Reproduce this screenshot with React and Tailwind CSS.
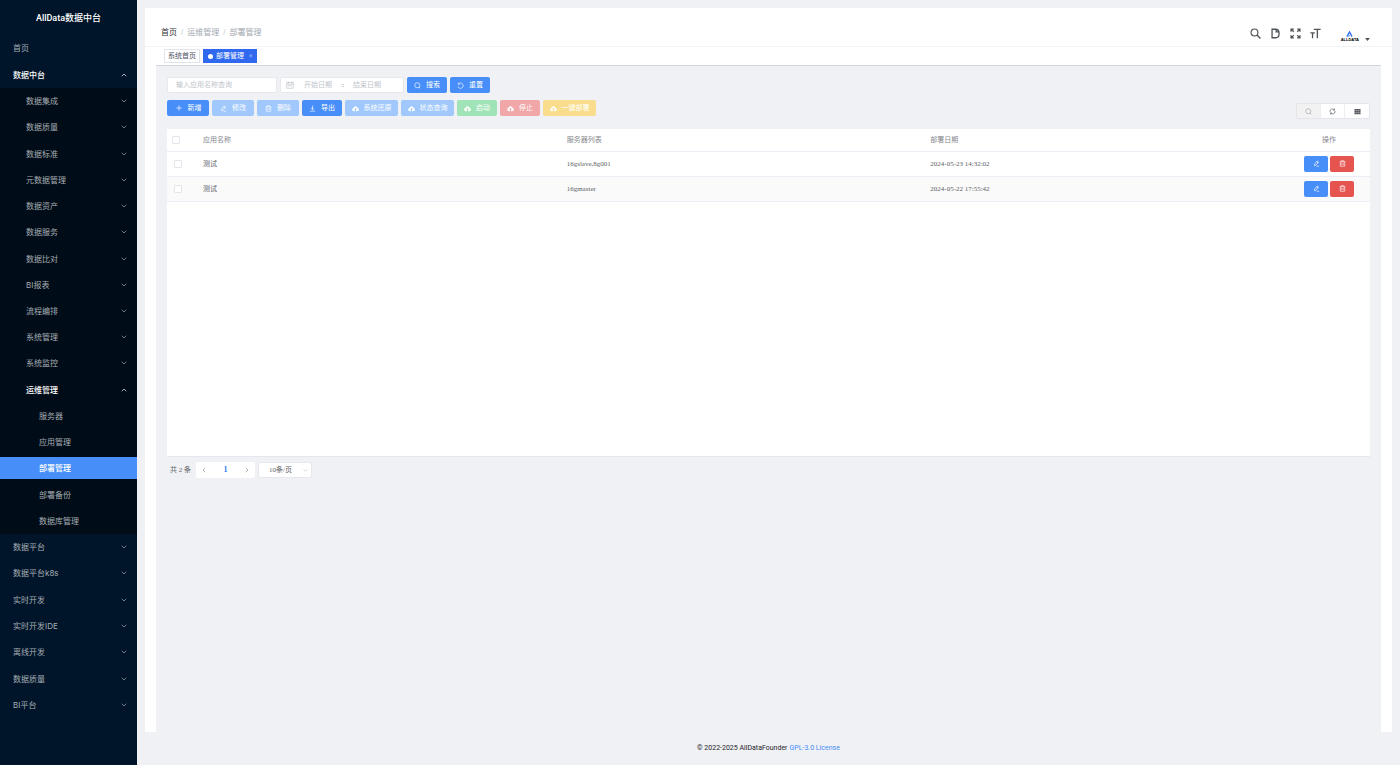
import React, { useState } from "react";
import { ChevronDown, ChevronUp, ChevronLeft, ChevronRight, Plus } from "lucide-react";

const subMenu = [
  { label: "数据集成" },
  { label: "数据质量" },
  { label: "数据标准" },
  { label: "元数据管理" },
  { label: "数据资产" },
  { label: "数据服务" },
  { label: "数据比对" },
  { label: "BI报表" },
  { label: "流程编排" },
  { label: "系统管理" },
  { label: "系统监控" },
  { label: "运维管理", open: true },
  { label: "服务器", leaf: true },
  { label: "应用管理", leaf: true },
  { label: "部署管理", leaf: true, active: true },
  { label: "部署备份", leaf: true },
  { label: "数据库管理", leaf: true },
];

const bottomMenu = ["数据平台", "数据平台k8s", "实时开发", "实时开发IDE", "离线开发", "数据质量", "BI平台"];

const rows = [
  { name: "测试", servers: "16gslave,8g001", date: "2024-05-23 14:32:02" },
  { name: "测试", servers: "16gmaster", date: "2024-05-22 17:55:42" },
];

function Icon({ children, className = "size-[7px]", box = "0 0 16 16", width = 1.5 }) {
  return (
    <svg viewBox={box} className={`shrink-0 ${className}`} fill="none" stroke="currentColor" strokeWidth={width} aria-hidden="true">
      {children}
    </svg>
  );
}

const EditIcon = ({ className }) => (
  <Icon className={className}>
    <path d="M3.5 9.5 9.8 2l3 2.5-6.3 7.6-3.3.9zM8.5 4l3 2.5M8 14.2h6" />
  </Icon>
);
const TrashIcon = ({ className }) => (
  <Icon className={className}>
    <path d="M1.5 4h13M5 4V1.8h6V4M3 4v10.2h10V4M6.3 7v4.2M9.7 7v4.2" />
  </Icon>
);
const DownloadIcon = () => (
  <Icon>
    <path d="M8 1.5V10M4.5 7 8 10.5 11.5 7M2 14h12" />
  </Icon>
);
const CloudIcon = () => (
  <svg viewBox="0 0 16 16" className="size-[7px] shrink-0" fill="currentColor" aria-hidden="true">
    <path fillRule="evenodd" d="M4 14a3.7 3.7 0 0 1-.8-7.3 5 5 0 0 1 9.7 0A3.7 3.7 0 0 1 12 14H9V10h2.3L8 6.4 4.7 10H7v4z" />
  </svg>
);
const SearchSmall = () => (
  <Icon>
    <circle cx="7.5" cy="7.5" r="5.8" />
    <path d="m11.6 11.6 3 3" />
  </Icon>
);
const ResetIcon = () => (
  <Icon>
    <path d="M3.5 4.5a6 6 0 1 1-1.2 5.5M3 1.5V5h3.7" />
  </Icon>
);
const RefreshIcon = () => (
  <Icon>
    <path d="M2.3 9.5V7.5a5.3 5.3 0 0 1 9.7-3M12.5 1.5v3.2H9.3M13.7 6.5v2a5.3 5.3 0 0 1-9.7 3M3.5 14.5v-3.2h3.2" />
  </Icon>
);
const GridIcon = () => (
  <svg viewBox="0 0 16 16" className="size-[7px] shrink-0" fill="currentColor" aria-hidden="true">
    <path d="M1 2h4.5v3.6H1zM5.800 2h4.400v3.600H5.800zM10.500 2H15v3.600h-4.500zM1 6.100h4.500v3.700H1zM5.800 6.100h4.400v3.700H5.800zM10.500 6.100H15v3.700h-4.500zM1 10.300h4.500V14H1zM5.800 10.300h4.400V14H5.800zM10.500 10.300H15V14h-4.500z" />
  </svg>
);
const CalendarIcon = () => (
  <Icon className="size-[8px]" width={1.2}>
    <path d="M1.5 3h13v11.5h-13zM1.5 6.500h13M5 1v3.500M11 1v3.500M4 9.800h8" />
  </Icon>
);

function MenuRow({ label, indent = "pl-[13px]", open, leaf, active, strong }) {
  const Chevron = open ? ChevronUp : ChevronDown;
  return (
    <li className="flex min-h-0 flex-1 items-center">
      <a
        href="#"
        aria-current={active ? "page" : undefined}
        className={`flex h-[22px] w-full items-center justify-between pr-[9px] ${indent} ${
          active ? "bg-[#478ef8] font-medium text-white" : strong ? "font-medium text-white" : "text-[#a6adb4]"
        }`}
      >
        <span>{label}</span>
        {!leaf && <Chevron className="size-[8px]" strokeWidth={2} />}
      </a>
    </li>
  );
}

function Sidebar() {
  return (
    <aside className="flex w-[137px] shrink-0 flex-col bg-[#001529] font-['Inter','Noto_Sans_CJK_SC',sans-serif] text-[8px] leading-[12px]">
      <h1 className="flex h-[35px] items-center justify-center font-['Roboto','Noto_Sans_CJK_SC',sans-serif] text-[9px] font-medium text-white">
        AllData数据中台
      </h1>
      <nav>
        <ul className="flex h-[53px] flex-col">
          <MenuRow label="首页" leaf />
          <MenuRow label="数据中台" open strong />
        </ul>
        <ul className="flex h-[446px] flex-col bg-[#000c17]">
          {subMenu.map((m, i) => (
            <MenuRow key={i} {...m} strong={m.open} indent={m.leaf ? "pl-[39px]" : "pl-[26px]"} />
          ))}
        </ul>
        <ul className="flex h-[184px] flex-col">
          {bottomMenu.map((label) => (
            <MenuRow key={label} label={label} />
          ))}
        </ul>
      </nav>
    </aside>
  );
}

function TopBar() {
  return (
    <header className="flex h-[39px] items-center justify-between border-b border-[#f2f3f5] pt-[12px] pr-[22px] pl-[16px]">
      <nav aria-label="breadcrumb" className="flex items-center gap-[4px] text-[8px] text-[#a3a8b0]">
        <a href="#" className="text-[#303133]">首页</a>
        <span>/</span>
        <span>运维管理</span>
        <span>/</span>
        <span>部署管理</span>
      </nav>
      <div className="flex items-center gap-[9px] text-[#4f5358]">
        <button type="button" aria-label="搜索" className="flex">
          <Icon className="size-[11px]" width={1.6}>
            <circle cx="6.5" cy="6.5" r="5" />
            <path d="m10.2 10.2 5 5" strokeWidth="2" />
          </Icon>
        </button>
        <button type="button" aria-label="文档" className="flex">
          <Icon className="size-[11px]" width={1.9}>
            <path d="M3 1.8h5.5c3 0 4.700 2.200 4.700 6.200s-1.700 6.200-4.700 6.200H3zM9 2v3.500h3.500" />
          </Icon>
        </button>
        <button type="button" aria-label="全屏" className="flex">
          <Icon className="size-[11px]" width={1.8}>
            <path d="M1.500 5.500v-4h4M2 2l3.500 3.500M10.500 1.500h4v4M14 2l-3.500 3.500M1.500 10.500v4h4M2 14l3.500-3.500M14.500 10.500v4h-4M14 14l-3.500-3.500" />
          </Icon>
        </button>
        <button type="button" aria-label="字号" className="flex">
          <Icon className="size-[11px]" width={1.9}>
            <path d="M5.500 2h10M10.700 2v13M.5 7h6.500M3.700 7v8" />
          </Icon>
        </button>
        <button type="button" aria-label="用户" className="ml-[11px] flex items-center gap-[6px]">
          <span className="flex flex-col items-center pt-[6px]">
            <svg viewBox="0 0 16 14" className="h-[6px] w-[7px]" fill="none" stroke="#2f6df0" strokeWidth="3" aria-hidden="true">
              <path d="M2 13 8 2l6 11" />
              <path d="m5.500 13 2.500-4" stroke="#6fa3ff" />
            </svg>
            <span className="font-['Liberation_Sans',sans-serif] text-[4px] leading-[5px] font-bold text-black">ALLDATA</span>
          </span>
          <svg viewBox="0 0 8 5" className="mt-[12px] h-[3px] w-[5px]" fill="#4f5358" aria-hidden="true">
            <path d="M0 0h8L4 5z" />
          </svg>
        </button>
      </div>
    </header>
  );
}

function Tabs() {
  return (
    <nav aria-label="tabs" className="flex h-[19px] items-center gap-[3px] border-b border-[#d3d6dc] pl-[8px] text-[7px]">
      <a href="#" className="flex h-[14px] items-center border border-[#e0e3ea] px-[3px] text-[#495060]">系统首页</a>
      <a href="#" aria-current="page" className="flex h-[14px] items-center gap-[3px] bg-[#3069f0] px-[5px] text-white">
        <span className="size-[5px] rounded-full bg-white" />
        部署管理
        <span className="ml-[2px] text-[6px]">×</span>
      </a>
    </nav>
  );
}

const fieldBox = "flex h-[16px] items-center rounded-[2px] border border-[#e6e8ed] bg-white text-[7px]";
const buttonBase = "flex h-[16px] items-center justify-center gap-[5px] rounded-[2px] text-[7px] text-white";

function Filters() {
  return (
    <form className="flex items-center gap-[3px]" onSubmit={(e) => e.preventDefault()}>
      <div className={`${fieldBox} w-[110px] px-[8px]`}>
        <input aria-label="应用名称" placeholder="输入应用名称查询" className="w-full outline-none placeholder:text-[#c0c4cc]" />
      </div>
      <div className={`${fieldBox} w-[124px] px-[5px] text-[#b4b8c0]`}>
        <CalendarIcon />
        <input aria-label="开始日期" placeholder="开始日期" className="w-[48px] text-center outline-none placeholder:text-[#c0c4cc]" />
        <span className="text-[#606266]">:</span>
        <input aria-label="结束日期" placeholder="结束日期" className="w-[46px] text-center outline-none placeholder:text-[#c0c4cc]" />
      </div>
      <button type="submit" className={`${buttonBase} w-[40px] bg-[#478ef8]`}>
        <SearchSmall />
        搜索
      </button>
      <button type="reset" className={`${buttonBase} w-[40px] bg-[#478ef8]`}>
        <ResetIcon />
        重置
      </button>
    </form>
  );
}

const actions = [
  { label: "新增", icon: <Plus className="size-[8px]" />, style: "w-[42px] bg-[#478ef8]" },
  { label: "修改", icon: <EditIcon />, style: "w-[42px] bg-[#a0c8fc]", disabled: true },
  { label: "删除", icon: <TrashIcon />, style: "w-[42px] bg-[#a0c8fc]", disabled: true },
  { label: "导出", icon: <DownloadIcon />, style: "w-[40px] bg-[#478ef8]" },
  { label: "系统还原", icon: <CloudIcon />, style: "w-[53px] bg-[#a0c8fc]", disabled: true },
  { label: "状态查询", icon: <CloudIcon />, style: "w-[53px] bg-[#a0c8fc]", disabled: true },
  { label: "启动", icon: <CloudIcon />, style: "w-[40px] bg-[#a0e3b6]", disabled: true },
  { label: "停止", icon: <CloudIcon />, style: "w-[40px] bg-[#f1a6a7]", disabled: true },
  { label: "一键部署", icon: <CloudIcon />, style: "w-[53px] bg-[#f9dd8c]", disabled: true },
];

function Toolbar() {
  const view = "flex w-[24px] items-center justify-center";
  return (
    <div className="mt-[7px] flex items-start justify-between">
      <div className="flex gap-[3px]">
        {actions.map((a) => (
          <button key={a.label} type="button" disabled={a.disabled} className={`${buttonBase} ${a.style}`}>
            {a.icon}
            {a.label}
          </button>
        ))}
      </div>
      <div className="mt-[3px] flex h-[16px] divide-x divide-[#eceef2] rounded-[2px] border border-[#e2e5ea] bg-white text-[#55585e]">
        <button type="button" aria-label="搜索" className={`${view} bg-[#f2f2f3] text-[#a0a3a9]`}>
          <SearchSmall />
        </button>
        <button type="button" aria-label="刷新" className={view}>
          <RefreshIcon />
        </button>
        <button type="button" aria-label="列设置" className={view}>
          <GridIcon />
        </button>
      </div>
    </div>
  );
}

const checkbox = "block size-[8px] appearance-none rounded-[1px] border border-[#e2e5ea] bg-white checked:bg-[#478ef8]";

function DeployTable() {
  const [picked, setPicked] = useState([false, false]);
  const all = picked.every(Boolean);
  return (
    <div className="mt-[10px] min-h-[328px] border-b border-[#e4e7ed] bg-white">
      <table className="w-full table-fixed text-left text-[7px] leading-[10px] text-[#606266]">
        <colgroup>
          <col className="w-[30px]" />
          <col />
          <col />
          <col />
          <col className="w-[82px]" />
        </colgroup>
        <thead>
          <tr className="h-[22px] border-b border-[#ebeef5] text-[#85888e]">
            <th className="pl-[5px]">
              <input type="checkbox" aria-label="全选" className={checkbox} checked={all} onChange={() => setPicked(picked.map(() => !all))} />
            </th>
            <th className="px-[6px] font-normal">应用名称</th>
            <th className="px-[6px] font-normal">服务器列表</th>
            <th className="px-[6px] font-normal">部署日期</th>
            <th className="text-center font-normal">操作</th>
          </tr>
        </thead>
        <tbody>
          {rows.map((r, i) => (
            <tr key={r.date} className="h-[25px] border-b border-[#ebeef5] even:bg-[#fafafa]">
              <td className="pl-[7px]">
                <input
                  type="checkbox"
                  aria-label={`选择 ${r.servers}`}
                  className={checkbox}
                  checked={picked[i]}
                  onChange={() => setPicked(picked.map((v, j) => (j === i ? !v : v)))}
                />
              </td>
              <td className="px-[6px]">{r.name}</td>
              <td className="px-[6px]">{r.servers}</td>
              <td className="px-[6px]">{r.date}</td>
              <td>
                <div className="flex justify-center gap-[2px]">
                  <button type="button" aria-label="编辑" className="flex h-[16px] w-[24px] items-center justify-center rounded-[2px] bg-[#478ef8] text-white">
                    <EditIcon />
                  </button>
                  <button type="button" aria-label="删除" className="flex h-[16px] w-[24px] items-center justify-center rounded-[2px] bg-[#e5544f] text-white">
                    <TrashIcon />
                  </button>
                </div>
              </td>
            </tr>
          ))}
        </tbody>
      </table>
    </div>
  );
}

function Pagination() {
  return (
    <div className="mt-[5px] flex items-center gap-[3px] pl-[3px] text-[7px] text-[#606266]">
      <span className="mr-[2px]">共 2 条</span>
      <div className="flex h-[16px] w-[59px] items-center justify-between rounded-[2px] bg-white px-[4px] text-[#8d9096]">
        <button type="button" aria-label="上一页"><ChevronLeft className="size-[8px]" /></button>
        <button type="button" aria-current="page" className="text-[8px] font-bold text-[#2f7cf6]">1</button>
        <button type="button" aria-label="下一页"><ChevronRight className="size-[8px]" /></button>
      </div>
      <div className="grid h-[16px] w-[54px] grid-cols-1 items-center rounded-[2px] border border-[#e6e8ed] bg-white">
        <select aria-label="每页条数" className="col-start-1 row-start-1 w-full appearance-none pl-[10px] outline-none">
          <option>10条/页</option>
          <option>20条/页</option>
        </select>
        <ChevronDown className="pointer-events-none col-start-1 row-start-1 mr-[2px] size-[7px] justify-self-end text-[#c0c4cc]" />
      </div>
    </div>
  );
}

export default function App() {
  return (
    <div className="flex min-h-screen bg-[#eff1f5] font-['Liberation_Serif','Noto_Sans_CJK_SC',serif] leading-[12px]">
      <Sidebar />
      <div className="flex min-w-0 flex-1 flex-col px-[8px] pt-[8px]">
        <main className="flex flex-1 flex-col bg-white">
          <TopBar />
          <div className="flex flex-1 flex-col px-[11px]">
            <Tabs />
            <div className="flex-1 bg-[#eff1f5] px-[11px] pt-[11px]">
              <Filters />
              <Toolbar />
              <DeployTable />
              <Pagination />
            </div>
          </div>
        </main>
        <footer className="flex h-[33px] items-center justify-center gap-[2px] pb-[2px] font-['Roboto',sans-serif] text-[7px] text-[#1f2329]">
          <span>© 2022-2025 AllDataFounder</span>
          <a href="#" className="text-[#478ef8]">GPL-3.0 License</a>
        </footer>
      </div>
    </div>
  );
}
